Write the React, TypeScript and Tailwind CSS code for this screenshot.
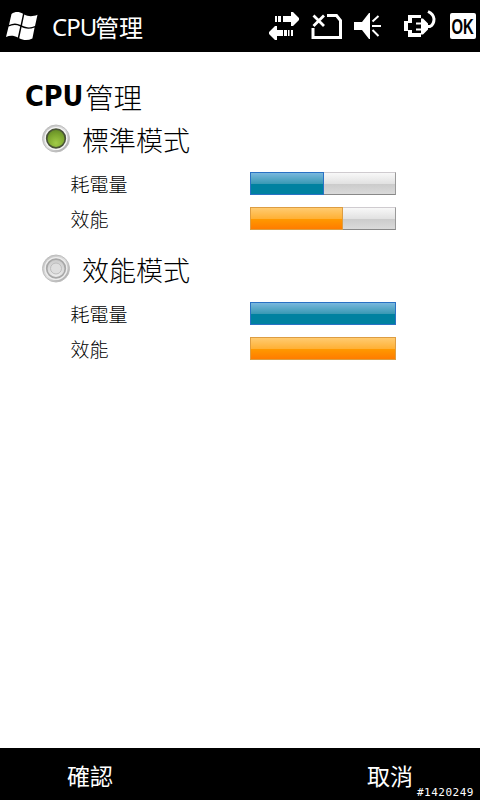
import React from 'react';

const sans = "font-['DejaVu_Sans_Condensed','Noto_Sans_CJK_TC',sans-serif]";
const cjk = "font-['Noto_Sans_CJK_TC',sans-serif]";

function WindowsFlag() {
  return (
    <svg width="34" height="32" viewBox="0 0 34 32" className="mt-[11px] ml-[5px] shrink-0" fill="#fff">
      <path d="M6.5 3 C10 .5 14 .5 18 2.700 L15.600 14 C12 12 8 12 4 14 Z" />
      <path d="M19.300 3.500 C23 5.500 27.500 5.800 32.500 3.700 L30 15 C26 17 21 16.800 17 14.600 Z" />
      <path d="M3.600 15.600 C7.500 13.500 11.500 13.500 15.200 15.500 L12.800 26.500 C9 24.500 5 24.200 1 26 Z" />
      <path d="M16.600 16.100 C20.500 18.200 25 18.300 29.600 16.500 L27.400 27.500 C23 29.700 18.500 29.600 14.200 27.300 Z" />
    </svg>
  );
}

function StatusIcons() {
  return (
    <svg width="212" height="52" viewBox="268 0 212 52" className="ml-auto shrink-0" fill="#fff">
      <path d="M275 16h2v6h-2z M278 16h3v6h-3z M283 16h8v-4h2l6 6v2l-6 6h-2v-4h-8z" />
      <path d="M293 30h-2v6h2z M289.500 30h-1.500v6h1.500z M287 30h-3v6h3z M283 30h-6v-4h-2l-6 6v2l6 6h2v-4h6z" />
      <g fill="none" stroke="#fff" strokeWidth="3">
        <path d="M327 15.500h9.500l4 5v17h-27.500v-9.500" />
        <path d="M313.500 15.500l10.500 10.500M324 15.500l-10.500 10.500" strokeWidth="2.800" />
      </g>
      <path d="M354 22h8l7-9h1v26h-1l-7-9h-8z" />
      <path d="M372.500 21.500l6-5.500M372 26h9M372.500 30l6 6" fill="none" stroke="#fff" strokeWidth="2" />
      <path d="M408 15h13v3h-9v5h-4v7h4v3h9v4h-13v-6h-4v-10h4z" />
      <path d="M416 22.500h5v-4h2l5 5v6l-5 5h-2v-4h-5v-2h5v-4h-5z" />
      <path d="M427 26.500h3q4 -2 4 -7.500q-.5 -5 -6 -7.500" fill="none" stroke="#fff" strokeWidth="3" />
      <rect x="450" y="13" width="26" height="26" rx="2" />
      <g transform="translate(451.5 34) scale(.66 1)">
        <text x="0" y="0" className="fill-black font-['Liberation_Sans',sans-serif] text-[22.500px] font-bold">OK</text>
      </g>
    </svg>
  );
}

function Radio({ on }: { on: boolean }) {
  const id = on ? 'on' : 'off';
  return (
    <svg width="30" height="30" viewBox="0 0 30 30" className="shrink-0">
      <defs>
        <linearGradient id={id + 'ring'} x1="0" y1="0" x2="1" y2="1">
          <stop offset="0" stopColor="#bcbcbc" />
          <stop offset=".5" stopColor="#dedede" />
          <stop offset="1" stopColor="#9c9c9c" />
        </linearGradient>
        <radialGradient id={id + 'core'} cx=".5" cy=".75" r=".8">
          <stop offset="0" stopColor={on ? '#a2cc48' : '#f2f2f2'} />
          <stop offset=".6" stopColor={on ? '#7ba52e' : '#d8d8d8'} />
          <stop offset="1" stopColor={on ? '#5f8526' : '#c4c4c4'} />
        </radialGradient>
      </defs>
      <circle cx="15" cy="14.500" r="13.500" fill={`url(#${id}ring)`} stroke="#bdbdbd" />
      <circle cx="15" cy="14.500" r="11.500" fill={on ? '#f5f5f5' : '#ededed'} />
      <circle cx="15" cy="14.500" r="9.300" fill={`url(#${id}core)`} stroke={on ? '#4a5438' : '#a8a8a8'} strokeWidth="1.700" />
      {!on && <circle cx="15" cy="14.500" r="5.500" fill="#dedede" stroke="#bcbcbc" />}
    </svg>
  );
}

function Meter({ color, width }: { color: 'blue' | 'orange'; width: number }) {
  const fill =
    color === 'blue'
      ? 'border-[#2a72c4] bg-[linear-gradient(#7ab8de_0%,#3b9ab5_50%,#0081a0_51%,#0081a0_100%)]'
      : 'border-[#dd9d42] bg-[linear-gradient(#ffcb70_0%,#ffb136_50%,#ff9900_53%,#ff7c00_100%)]';
  return (
    <div className="h-[23px] w-[146px] shrink-0 border border-t-[#cfcbcf] border-r-[#999] border-b-[#888] border-l-[#999] bg-[linear-gradient(#f8f8f8_0%,#e2e2e2_50%,#cbcbcb_52%,#dadada_100%)]">
      <div className={`-mt-px -ml-px h-[23px] border ${fill}`} style={{ width }} />
    </div>
  );
}

function Row({ label, color, width }: { label: string; color: 'blue' | 'orange'; width: number }) {
  return (
    <div className="flex h-[35px] items-center pl-[70.5px]">
      <span className={`w-[179.5px] text-[19px] leading-[35px] font-light ${cjk}`}>{label}</span>
      <Meter color={color} width={width} />
    </div>
  );
}

function Mode({ name, on, power, speed }: { name: string; on: boolean; power: number; speed: number }) {
  return (
    <section className="h-[130px]">
      <div className="flex h-[42px] items-center pl-[41px]">
        <Radio on={on} />
        <span className={`ml-[11px] pt-px text-[27px] leading-[42px] font-light ${cjk}`}>{name}</span>
      </div>
      <div className="pt-1.5">
        <Row label="耗電量" color="blue" width={power} />
        <Row label="效能" color="orange" width={speed} />
      </div>
    </section>
  );
}

export default function App() {
  return (
    <div className="flex h-[800px] w-[480px] flex-col bg-white text-black">
      <header className="flex h-[52px] shrink-0 bg-black text-white">
        <WindowsFlag />
        <div className="ml-[13px] flex h-[54px] items-center text-[24px] leading-none whitespace-nowrap">
          <span className="w-[43px] font-['Noto_Sans',sans-serif] tracking-[-1px]">CPU</span>
          <span className={cjk}>管理</span>
        </div>
        <StatusIcons />
      </header>
      <main className="grow pt-[24px]">
        <h1 className="flex h-[42px] items-center pl-[25px] text-[28.500px] leading-[42px]">
          <span className={`w-[60px] font-bold ${sans}`}>CPU</span>
          <span className={`font-light ${cjk}`}>管理</span>
        </h1>
        <Mode name="標準模式" on power={74} speed={93} />
        <Mode name="效能模式" on={false} power={146} speed={146} />
      </main>
      <footer className={`flex h-[52px] shrink-0 bg-black text-[23px] leading-[54px] text-white ${cjk}`}>
        <span className="ml-[67px] w-[300px]">確認</span>
        <span className="w-[50px]">取消</span>
        <span className="mt-[39px] h-3 w-[60px] font-['DejaVu_Sans_Mono',monospace] text-[11px] leading-3 tracking-[0.5px]">#1420249</span>
      </footer>
    </div>
  );
}
